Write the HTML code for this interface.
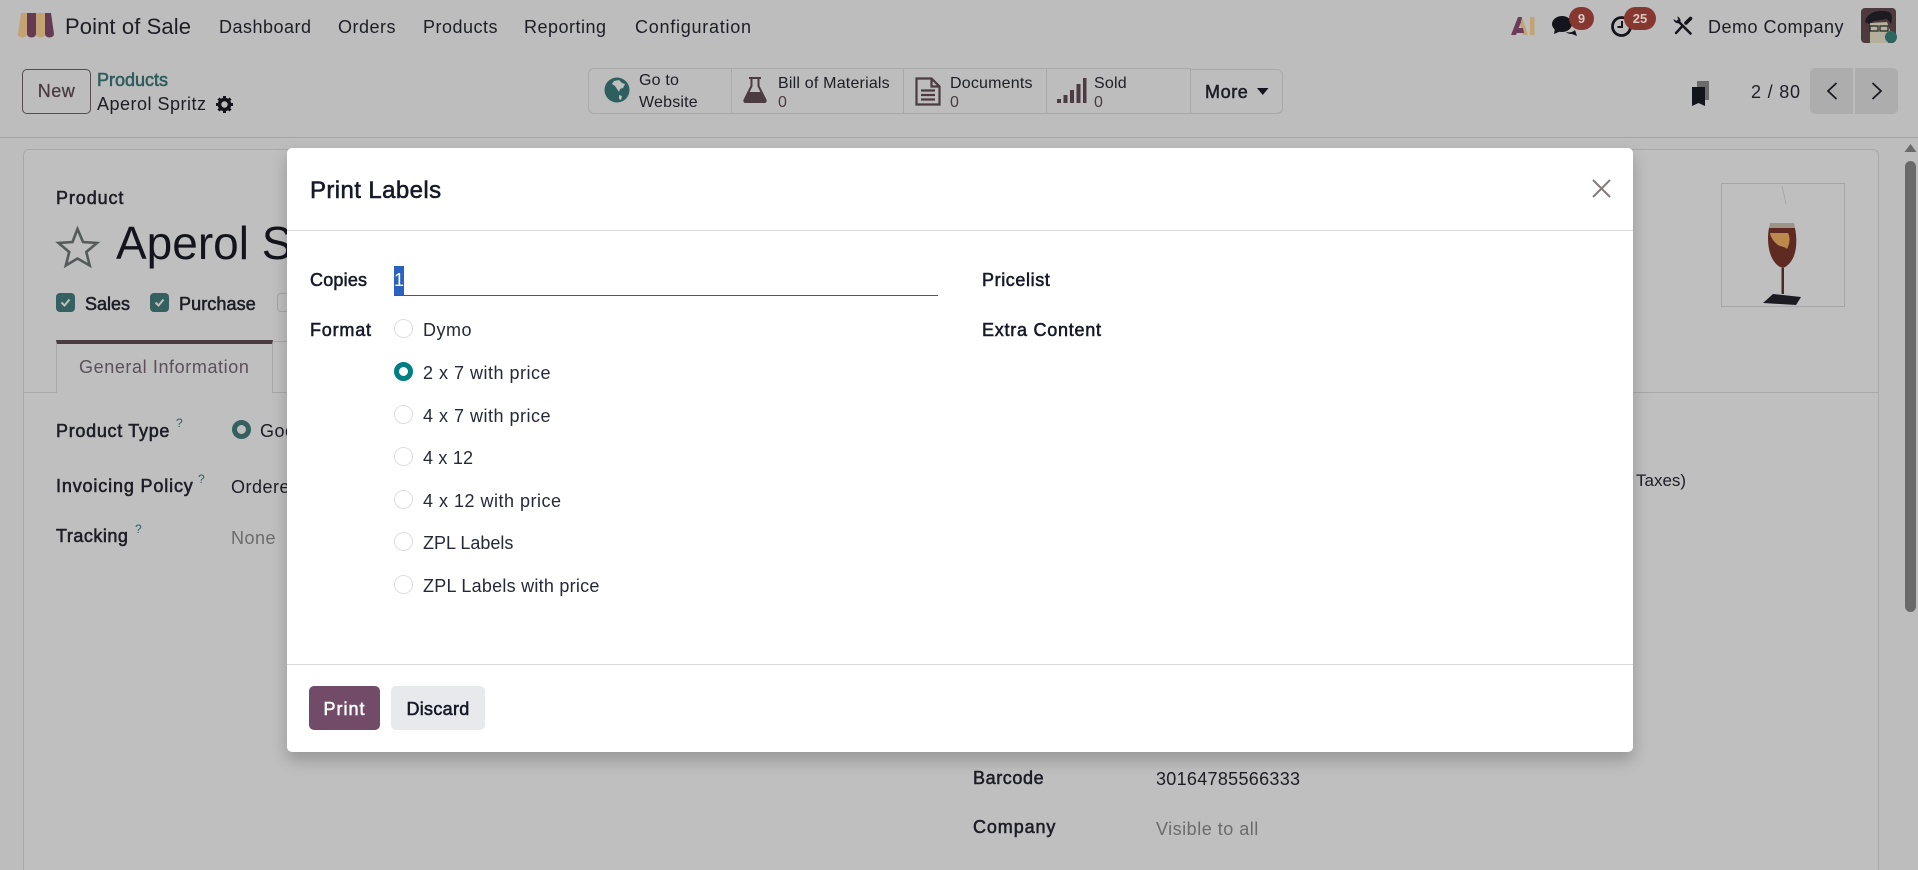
<!DOCTYPE html>
<html lang="en">
<head>
<meta charset="utf-8">
<title>Print Labels</title>
<style>
html,body{margin:0;padding:0;width:1918px;height:870px;overflow:hidden;background:#bdbdbd}
body{position:relative;font-family:"Liberation Sans",Arial,sans-serif;font-size:18px;letter-spacing:.5px;color:#1d1d26}
.t{position:absolute;white-space:nowrap;line-height:24px;height:24px}
.b{font-weight:400;font-size:18px;letter-spacing:.6px;-webkit-text-stroke:.55px currentColor}
.s{font-size:16px;letter-spacing:.2px;color:#1d1d26}
.g{color:#6b6b6b}
.box{position:absolute;box-sizing:border-box}
svg{position:absolute;overflow:visible}
.q{position:absolute;font-size:12px;line-height:12px;color:#2f6060;letter-spacing:0}
#modal{position:absolute;left:287px;top:148px;width:1346px;height:604px;background:#fff;border-radius:5px;box-shadow:0 8px 16px rgba(0,0,0,.22);color:#1f2433}
#modal .t{color:#262a38}
#modal .b{color:#161a28}
.r{position:absolute;left:107px;width:19px;height:19px;box-sizing:border-box;border:1px solid #dcdee1;border-radius:50%;background:#fff}
.r.on{border:5px solid #017e84}
</style>
</head>
<body>
<!-- nav -->
<svg style="left:18px;top:13px" width="36" height="25" viewBox="0 0 36 25">
<path d="M3 0h6v21a4.500 3.500 0 0 1-9 0z" fill="#c3a273"/>
<path d="M9 0h9v21a4.500 3.500 0 0 1-9 0z" fill="#663a52"/>
<path d="M18 0h9v21a4.500 3.500 0 0 1-9 0z" fill="#c3a273"/>
<path d="M27 0h6l3 21a4.500 3.500 0 0 1-9 0z" fill="#663a52"/>
</svg>
<span class="t" style="left:65px;top:15px;font-size:22px;letter-spacing:.1px">Point of Sale</span>
<span class="t" style="left:219px;top:15px">Dashboard</span>
<span class="t" style="left:338px;top:15px">Orders</span>
<span class="t" style="left:423px;top:15px">Products</span>
<span class="t" style="left:524px;top:15px">Reporting</span>
<span class="t" style="left:635px;top:15px;letter-spacing:.75px">Configuration</span>

<!-- AI -->
<svg style="left:1511px;top:16px" width="24" height="20" viewBox="0 0 24 20">
<path d="M7 1h4l6 18h-5z" fill="#c3a273"/>
<path d="M0 19L7 1h4l-1 5-5 13z" fill="#6b3c55"/>
<path d="M4 12h8l1 5H3z" fill="#6b3c55"/>
<rect x="19" y="1" width="4.500" height="18" fill="#c3a273"/>
</svg>
<!-- chat -->
<svg style="left:1552px;top:15px" width="28" height="22" viewBox="0 0 28 22">
<ellipse cx="10" cy="9" rx="10" ry="8" fill="#14141c"/>
<path d="M3 13l-1 6 7-3z" fill="#14141c"/>
<path d="M14 17c4 1 7 0 9-2l2 6-5-2c-2 0-4 0-6-2z" fill="#14141c"/>
</svg>
<div class="box" style="left:1569px;top:7px;width:25px;height:23px;border-radius:12px;background:#863830;color:#d8c8c4;font:700 13px/23px 'Liberation Sans',sans-serif;letter-spacing:0;text-align:center">9</div>
<!-- clock -->
<svg style="left:1610px;top:14px" width="24" height="24" viewBox="0 0 24 24">
<circle cx="11.500" cy="12.500" r="9" fill="none" stroke="#14141c" stroke-width="2.800"/>
<path d="M12 7v6H7.500" fill="none" stroke="#14141c" stroke-width="2"/>
</svg>
<div class="box" style="left:1624px;top:7px;width:32px;height:23px;border-radius:12px;background:#863830;color:#d8c8c4;font:700 13px/23px 'Liberation Sans',sans-serif;letter-spacing:0;text-align:center">25</div>
<!-- tools -->
<svg style="left:1673px;top:16px" width="20" height="20" viewBox="0 0 20 20">
<path d="M5 5L17.500 17.500" stroke="#14141c" stroke-width="2.600" stroke-linecap="round"/>
<path d="M0.500 3a4.500 4.500 0 0 0 6 4l1-1a4.500 4.500 0 0 0-3.500-5.500l1.500 3-2 1.500z" fill="#14141c"/>
<path d="M17.500 2.500L13 7" stroke="#14141c" stroke-width="3.600" stroke-linecap="round"/>
<path d="M9 10.500L3 17" stroke="#14141c" stroke-width="2.400" stroke-linecap="round"/>
</svg>
<span class="t" style="left:1708px;top:15px">Demo Company</span>
<!-- avatar -->
<svg style="left:1861px;top:8px" width="36" height="36" viewBox="0 0 36 36">
<rect width="35" height="35" rx="4" fill="#4c3a3f"/>
<path d="M9 35V15l17-1 5 14-4 7z" fill="#b4b09c"/>
<path d="M4 14C6 4 18 1 28 4c4 2 3 8 2 12l-4-5-13 2-5 3z" fill="#1d1a20"/>
<path d="M9 18h8v5H9zM19 18h8v5h-8z" fill="none" stroke="#222" stroke-width="1.200"/>
<circle cx="30" cy="29" r="6" fill="#2f6560"/>
</svg>

<!-- control panel -->
<div class="box" style="left:22px;top:69px;width:69px;height:45px;border:1px solid #574a50;border-radius:5px;color:#4b3c42;-webkit-text-stroke:.3px #4b3c42;text-align:center;line-height:43px">New</div>
<span class="t b" style="left:97px;top:68px;color:#2e5c5c;letter-spacing:0">Products</span>
<span class="t" style="left:97px;top:92px">Aperol Spritz</span>
<svg style="left:216px;top:96px" width="17" height="17" viewBox="0 0 17 17">
<circle cx="8.500" cy="8.500" r="5" fill="none" stroke="#14141c" stroke-width="3.600"/>
<path d="M8.500 0v3M8.500 14v3M0 8.500h3M14 8.500h3M2.500 2.500l2 2M12.500 12.500l2 2M14.500 2.500l-2 2M4.500 12.500l-2 2" stroke="#14141c" stroke-width="3"/>
</svg>

<div class="box" style="left:588px;top:68px;width:603px;height:46px;border:1px solid #a9a9a9;border-radius:6px 0 0 6px"></div>
<div class="box" style="left:731px;top:68px;width:1px;height:46px;background:#a9a9a9"></div>
<div class="box" style="left:903px;top:68px;width:1px;height:46px;background:#a9a9a9"></div>
<div class="box" style="left:1046px;top:68px;width:1px;height:46px;background:#a9a9a9"></div>
<div class="box" style="left:1190px;top:69px;width:93px;height:45px;border:1px solid #a9a9a9;border-left:0;border-radius:0 6px 6px 0"></div>

<svg style="left:604px;top:77px" width="26" height="26" viewBox="0 0 26 26">
<circle cx="13" cy="13" r="12.500" fill="#2d5f5f"/>
<path d="M10 4l5-1 3 3 3 1-2 4-3 1-1 3-2-3-2-3-3-2z" fill="#bfbfbf"/>
<path d="M15 18l3 1-1 4-2-1z" fill="#bfbfbf"/>
</svg>
<span class="t s" style="left:639px;top:69px">Go to</span>
<span class="t s" style="left:639px;top:91px">Website</span>

<svg style="left:743px;top:77px" width="24" height="26" viewBox="0 0 24 26">
<path d="M6 1h12M8.500 1v8L1.500 23c-.5 1 0 2 1 2h19c1 0 1.500-1 1-2L15.500 9V1" fill="none" stroke="#4b3c42" stroke-width="2"/>
<path d="M6 15h12l5 10H1z" fill="#4b3c42"/>
</svg>
<span class="t s" style="left:778px;top:72px">Bill of Materials</span>
<span class="t s" style="left:778px;top:91px;color:#4b3c42">0</span>

<svg style="left:915px;top:77px" width="26" height="29" viewBox="0 0 26 29">
<path d="M1.500 1.500h15l8 8v18h-23zM16.500 1.500v8h8" fill="none" stroke="#4b3c42" stroke-width="2.200"/>
<path d="M6 13.500h14M6 18h14M6 22.500h14" stroke="#4b3c42" stroke-width="2.200"/>
</svg>
<span class="t s" style="left:950px;top:72px">Documents</span>
<span class="t s" style="left:950px;top:91px;color:#4b3c42">0</span>

<svg style="left:1057px;top:78px" width="30" height="26" viewBox="0 0 30 26">
<g fill="#4b3c42"><rect x="0" y="21" width="4" height="4"/><rect x="6.500" y="17" width="4" height="8"/><rect x="13" y="12" width="4" height="13"/><rect x="19.500" y="6" width="4" height="19"/><rect x="26" y="0" width="3.500" height="25"/></g>
</svg>
<span class="t s" style="left:1094px;top:72px">Sold</span>
<span class="t s" style="left:1094px;top:91px;color:#4b3c42">0</span>

<span class="t b" style="left:1205px;top:80px;letter-spacing:.6px">More</span>
<svg style="left:1257px;top:88px" width="12" height="7" viewBox="0 0 12 7"><path d="M0 0h11.500L5.750 7z" fill="#14141c"/></svg>

<!-- bookmark -->
<svg style="left:1692px;top:81px" width="18" height="26" viewBox="0 0 18 26">
<path d="M5 0h12v19h-4V6H5z" fill="#6b6b6b"/>
<path d="M0 6h13v19l-6.500-3-6.500 3z" fill="#14141c"/>
</svg>
<span class="t" style="left:1751px;top:80px;letter-spacing:.8px">2 / 80</span>
<div class="box" style="left:1810px;top:68px;width:43px;height:46px;background:#adadad;border-radius:5px 0 0 5px"></div>
<div class="box" style="left:1855px;top:68px;width:43px;height:46px;background:#adadad;border-radius:0 5px 5px 0"></div>
<svg style="left:1826px;top:82px" width="12" height="18" viewBox="0 0 12 18"><path d="M10.500 1L2 9l8.500 8" fill="none" stroke="#14141c" stroke-width="1.700"/></svg>
<svg style="left:1871px;top:82px" width="12" height="18" viewBox="0 0 12 18"><path d="M1.500 1L10 9l-8.500 8" fill="none" stroke="#14141c" stroke-width="1.700"/></svg>

<div class="box" style="left:0;top:137px;width:1918px;height:1px;background:#a6a6a6"></div>

<!-- card -->
<div class="box" style="left:23px;top:149px;width:1856px;height:740px;background:#bfbfbf;border:1px solid #a8a8a8;border-radius:6px 6px 0 0"></div>

<span class="t b" style="left:56px;top:186px;letter-spacing:.9px">Product</span>
<svg style="left:56px;top:226px" width="43" height="42" viewBox="0 0 43 42">
<path d="M21.500 3l5.500 13 14 1-10.700 9 3.400 13.500L21.500 32.500 9.800 39.500 13.200 26 2.500 17l14-1z" fill="none" stroke="#555a5a" stroke-width="2.600"/>
</svg>
<span class="t" style="left:116px;top:216px;height:54px;line-height:54px;font-size:46px;letter-spacing:0;color:#14141c">Aperol S</span>

<div class="box" style="left:56px;top:293px;width:19px;height:19px;border-radius:4px;background:#34605f"></div>
<svg style="left:56px;top:293px" width="19" height="19" viewBox="0 0 19 19"><path d="M5.500 9.500l3 3 5-6" fill="none" stroke="#bfbfbf" stroke-width="2"/></svg>
<span class="t b" style="left:85px;top:292px;letter-spacing:0">Sales</span>
<div class="box" style="left:150px;top:293px;width:19px;height:19px;border-radius:4px;background:#34605f"></div>
<svg style="left:150px;top:293px" width="19" height="19" viewBox="0 0 19 19"><path d="M5.500 9.500l3 3 5-6" fill="none" stroke="#bfbfbf" stroke-width="2"/></svg>
<span class="t b" style="left:179px;top:292px;letter-spacing:.1px">Purchase</span>
<div class="box" style="left:277px;top:293px;width:19px;height:19px;border-radius:4px;border:1px solid #a5a5a5"></div>

<div class="box" style="left:24px;top:392px;width:32px;height:1px;background:#a8a8a8"></div>
<div class="box" style="left:272px;top:392px;width:1606px;height:1px;background:#a8a8a8"></div>
<div class="box" style="left:56px;top:340px;width:217px;height:53px;background:#bfbfbf;border:1px solid #a8a8a8;border-top:4px solid #4b3c42;border-bottom:0"></div>
<div class="box" style="left:273px;top:341px;width:20px;height:1px;background:#a8a8a8"></div>
<span class="t" style="left:79px;top:355px;color:#5a5057;letter-spacing:.6px">General Information</span>

<span class="t b" style="left:56px;top:419px;letter-spacing:.7px">Product Type</span><span class="q" style="left:176px;top:417px">?</span>
<div class="box" style="left:232px;top:420px;width:19px;height:19px;border-radius:50%;border:5px solid #34605f"></div>
<span class="t" style="left:260px;top:419px">Goods</span>

<span class="t b" style="left:56px;top:474px;letter-spacing:.85px">Invoicing Policy</span><span class="q" style="left:198px;top:473px">?</span>
<span class="t" style="left:231px;top:475px">Ordered</span>

<span class="t b" style="left:56px;top:524px;letter-spacing:.5px">Tracking</span><span class="q" style="left:135px;top:523px">?</span>
<span class="t g" style="left:231px;top:526px">None</span>

<span class="t" style="left:1636px;top:469px;font-size:17px;letter-spacing:0">Taxes)</span>

<span class="t b" style="left:973px;top:766px">Barcode</span>
<span class="t" style="left:1156px;top:767px;letter-spacing:.3px">30164785566333</span>
<span class="t b" style="left:973px;top:815px;letter-spacing:.9px">Company</span>
<span class="t g" style="left:1156px;top:817px">Visible to all</span>

<!-- product image -->
<div class="box" style="left:1721px;top:183px;width:124px;height:124px;border:1px solid #a5a5a5"></div>
<svg style="left:1721px;top:183px" width="124" height="124" viewBox="0 0 124 124">
<path d="M61 3l4 18" stroke="#a8a8a8" stroke-width="1"/>
<path d="M48 45h26c2 10 2 22-2 30-3 6-7 9-10 10-4-1-8-4-11-10-4-8-5-20-3-30z" fill="#5e2a22"/>
<path d="M49 50h18c3 6 1 12-1 16-3-3-6-2-9-4-4-3-7-7-8-12z" fill="#b98a4c"/>
<path d="M49 40h24l1 5H48z" fill="#9c9486"/>
<path d="M60.500 85h2.500v26h-2.500z" fill="#4a2a22"/>
<path d="M42 120l10-9 28 3-5 8z" fill="#1c1a22"/>
</svg>

<!-- scrollbar -->
<svg style="left:1904px;top:143px" width="13" height="10" viewBox="0 0 13 10"><path d="M6.500 1L12.500 9H.5z" fill="#6a6a6a"/></svg>
<div class="box" style="left:1905px;top:161px;width:11px;height:451px;background:#696969;border-radius:6px"></div>

<!-- modal -->
<div id="modal">
<span class="t b" style="left:23px;top:29px;height:28px;line-height:28px;font-size:24px;letter-spacing:.4px">Print Labels</span>
<svg style="left:1305px;top:31px" width="19" height="19" viewBox="0 0 19 19"><path d="M1 1l17 17M18 1L1 18" stroke="#857c7c" stroke-width="2"/></svg>
<div class="box" style="left:0;top:82px;width:1346px;height:1px;background:#d8dadd"></div>

<span class="t b" style="left:23px;top:120px;letter-spacing:.2px">Copies</span>
<div class="box" style="left:107px;top:118px;width:10px;height:29px;background:#2a62c0"></div>
<span class="t" style="left:107px;top:120px;color:#fff;letter-spacing:0">1</span>
<div class="box" style="left:107px;top:147px;width:544px;height:1px;background:#1b6e72"></div>
<span class="t b" style="left:695px;top:120px">Pricelist</span>

<span class="t b" style="left:23px;top:170px;letter-spacing:.8px">Format</span>
<span class="t b" style="left:695px;top:170px;letter-spacing:.75px">Extra Content</span>

<div class="r" style="top:171px"></div><span class="t" style="left:136px;top:170px">Dymo</span>
<div class="r on" style="top:214px"></div><span class="t" style="left:136px;top:213px">2 x 7 with price</span>
<div class="r" style="top:257px"></div><span class="t" style="left:136px;top:256px">4 x 7 with price</span>
<div class="r" style="top:299px"></div><span class="t" style="left:136px;top:298px;letter-spacing:.2px">4 x 12</span>
<div class="r" style="top:342px"></div><span class="t" style="left:136px;top:341px">4 x 12 with price</span>
<div class="r" style="top:384px"></div><span class="t" style="left:136px;top:383px;letter-spacing:0">ZPL Labels</span>
<div class="r" style="top:427px"></div><span class="t" style="left:136px;top:426px;letter-spacing:.25px">ZPL Labels with price</span>

<div class="box" style="left:0;top:516px;width:1346px;height:1px;background:#d8dadd"></div>
<div class="box" style="left:22px;top:538px;width:71px;height:44px;background:#714b67;border-radius:5px;color:#fff;-webkit-text-stroke:.55px #fff;letter-spacing:1px;text-align:center;line-height:46px">Print</div>
<div class="box" style="left:104px;top:538px;width:94px;height:44px;background:#e7e9ed;border-radius:5px;color:#161a28;-webkit-text-stroke:.55px #161a28;letter-spacing:.3px;text-align:center;line-height:46px">Discard</div>
</div>
</body>
</html>
